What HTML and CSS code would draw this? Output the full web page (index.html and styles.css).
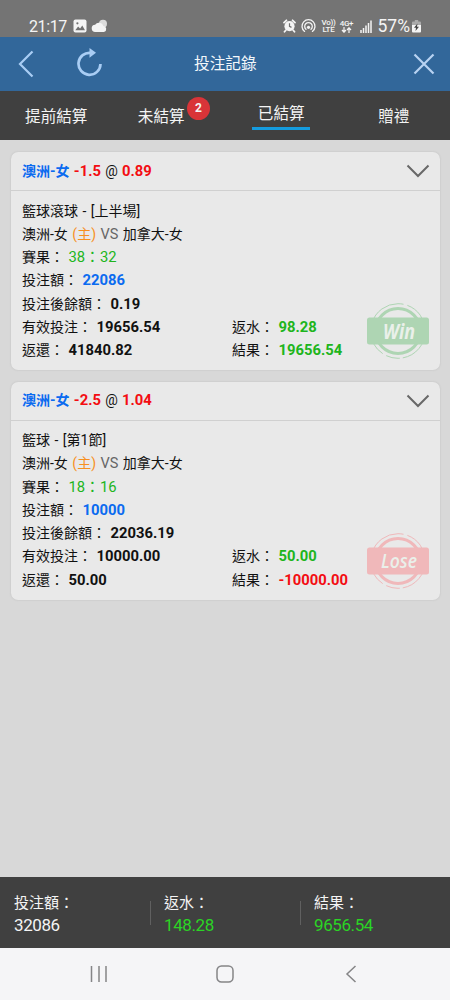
FILE: index.html
```html
<!DOCTYPE html>
<html lang="zh-Hant">
<head>
  <meta charset="UTF-8">
  <meta name="viewport" content="width=device-width, initial-scale=1">
  <title>投注記錄</title>
  <link rel="stylesheet" href="styles.css">
</head>
<body>

  <div class="status-bar">
    <span class="clock">21:17</span>
    <svg class="status-left" width="34" height="14" viewBox="0 0 34 14">
      <rect x="0.5" y="0.5" width="13" height="13" rx="2" fill="#f4f4f4"/>
      <path d="M2.3 11.2l2.8-3.6 2 2 2.2-3 2.7 4.6z" fill="#707070"/>
      <circle cx="4.4" cy="4.3" r="1.1" fill="#707070"/>
      <circle cx="30" cy="4.8" r="4" fill="#dcdcdc"/>
      <path d="M22.500 13a3.600 3.600 0 0 1-.4-7.200 4.600 4.600 0 0 1 8.300 1.300A3 3 0 0 1 31 13z" fill="#f4f4f4"/>
    </svg>
    <div class="status-right">
      <svg width="13" height="14" viewBox="0 0 13 14">
        <circle cx="6.5" cy="7.2" r="5.1" fill="#f4f4f4"/>
        <path d="M1 3.600l2.400-2.300M12 3.600L9.600 1.300M2.800 11.200l-1.300 1.600M10.200 11.200l1.300 1.600" stroke="#f4f4f4" stroke-width="1.800" stroke-linecap="round"/>
        <path d="M6.500 4.200v3.200l2 1" stroke="#707070" stroke-width="1.200" fill="none"/>
      </svg>
      <svg class="hotspot" width="15" height="14" viewBox="0 0 15 14">
        <g fill="none" stroke="#f4f4f4" stroke-width="1.300" stroke-linecap="round">
          <path d="M3.600 12.400a6.500 6.500 0 1 1 7.800 0"/>
          <path d="M5 10.300a3.800 3.800 0 1 1 5 0"/>
        </g>
        <circle cx="7.500" cy="8.300" r="1.600" fill="#f4f4f4"/>
      </svg>
      <span class="network volte">Vo))<br>LTE</span>
      <span class="network data">4G+<br>
        <svg width="11" height="6" viewBox="0 0 11 6">
          <path d="M3 0v5M1 3l2 2.200L5 3M8 6V1M6 3l2-2.200L10 3" fill="none" stroke="#f4f4f4" stroke-width="1.200"/>
        </svg>
      </span>
      <svg class="signal" width="12" height="13" viewBox="0 0 12 13">
        <path d="M1 13v-3M3.500 13V8M6 13V5.500M8.500 13V3M11 13V.5" stroke="#f4f4f4" stroke-width="1.500"/>
      </svg>
      <span class="battery">57%</span>
      <svg width="9" height="13" viewBox="0 0 9 13">
        <path d="M2.800 0h3.400v1.500H8a1 1 0 0 1 1 1V5H0V2.500a1 1 0 0 1 1-1h1.800z" fill="#aaa"/>
        <path d="M0 5h9v6.500a1 1 0 0 1-1 1H1a1 1 0 0 1-1-1z" fill="#f4f4f4"/>
        <path d="M5.500 3.500L2 7.700h2L3.500 11 7 6.800H5z" fill="#444"/>
      </svg>
    </div>
  </div>

  <header class="header">
    <svg class="back" width="16" height="28" viewBox="0 0 16 28">
      <path d="M14.500 1.500L2 14l12.500 12.500" fill="none" stroke="#a9cdf4" stroke-width="2.200"/>
    </svg>
    <svg class="refresh" width="26" height="29" viewBox="0 0 26 29">
      <path d="M14 4.900A11 11 0 1 0 23.500 16" fill="none" stroke="#a9cdf4" stroke-width="2.700"/>
      <path d="M12.500 0l6.500 4.700-6.500 5z" fill="#a9cdf4"/>
    </svg>
    <h1>投注記錄</h1>
    <svg class="close" width="22" height="22" viewBox="0 0 22 22">
      <path d="M1.500 1.500l19 19M20.500 1.500l-19 19" stroke="#b9d3f2" stroke-width="2.200"/>
    </svg>
  </header>

  <nav class="tabs">
    <a class="tab">提前結算</a>
    <a class="tab pending"><span class="tab-label">未結算<span class="badge">2</span></span></a>
    <a class="tab active"><span class="tab-label">已結算</span></a>
    <a class="tab">贈禮</a>
  </nav>

  <main class="content">
    <section class="card">
      <div class="card-head">
        <div class="pick"><span class="team">澳洲-女</span> <b class="red">-1.5</b> @ <b class="red">0.89</b></div>
        <svg width="24" height="14" viewBox="0 0 24 14">
          <path d="M1.500 1.500L12 12 22.500 1.500" fill="none" stroke="#686868" stroke-width="2"/>
        </svg>
      </div>
      <div class="card-body">
        <div class="row">籃球滾球 - [上半場]</div>
        <div class="row">澳洲-女 <span class="home">(主)</span> <span class="vs">VS</span> 加拿大-女</div>
        <div class="row">賽果： <span class="score">38：32</span></div>
        <div class="row">投注額： <b class="blue">22086</b></div>
        <div class="row">投注後餘額： <b>0.19</b></div>
        <div class="row split"><div>有效投注： <b>19656.54</b></div><div>返水： <b class="green">98.28</b></div></div>
        <div class="row split"><div>返還： <b>41840.82</b></div><div>結果： <b class="green">19656.54</b></div></div>
        <svg class="stamp win" width="62" height="58" viewBox="0 0 62 58">
          <circle class="ring" cx="31" cy="29" r="22.500"/>
          <circle class="dash" cx="31" cy="29" r="27.300"/>
          <rect x="0" y="15.500" width="62" height="27" rx="2.500"/>
          <text x="16" y="37" textLength="32" lengthAdjust="spacingAndGlyphs">Win</text>
        </svg>
      </div>
    </section>

    <section class="card">
      <div class="card-head">
        <div class="pick"><span class="team">澳洲-女</span> <b class="red">-2.5</b> @ <b class="red">1.04</b></div>
        <svg width="24" height="14" viewBox="0 0 24 14">
          <path d="M1.500 1.500L12 12 22.500 1.500" fill="none" stroke="#686868" stroke-width="2"/>
        </svg>
      </div>
      <div class="card-body">
        <div class="row">籃球 - [第1節]</div>
        <div class="row">澳洲-女 <span class="home">(主)</span> <span class="vs">VS</span> 加拿大-女</div>
        <div class="row">賽果： <span class="score">18：16</span></div>
        <div class="row">投注額： <b class="blue">10000</b></div>
        <div class="row">投注後餘額： <b>22036.19</b></div>
        <div class="row split"><div>有效投注： <b>10000.00</b></div><div>返水： <b class="green">50.00</b></div></div>
        <div class="row split"><div>返還： <b>50.00</b></div><div>結果： <b class="red">-10000.00</b></div></div>
        <svg class="stamp lose" width="62" height="58" viewBox="0 0 62 58">
          <circle class="ring" cx="31" cy="29" r="22.500"/>
          <circle class="dash" cx="31" cy="29" r="27.300"/>
          <rect x="0" y="15.500" width="62" height="27" rx="2.500"/>
          <text x="14" y="36" textLength="36" lengthAdjust="spacingAndGlyphs">Lose</text>
        </svg>
      </div>
    </section>
  </main>

  <footer class="summary">
    <div class="total"><div>投注額：</div><div class="amount">32086</div></div>
    <div class="total"><div>返水：</div><div class="amount up">148.28</div></div>
    <div class="total"><div>結果：</div><div class="amount up">9656.54</div></div>
  </footer>

  <div class="nav-bar">
    <svg width="18" height="18" viewBox="0 0 18 18">
      <path d="M1.500 1v16M9 1v16M16 1v16" stroke="#858587" stroke-width="1.500"/>
    </svg>
    <svg width="18" height="18" viewBox="0 0 18 18">
      <rect x="1" y="1" width="16" height="16" rx="4.500" fill="none" stroke="#858587" stroke-width="1.500"/>
    </svg>
    <svg width="18" height="18" viewBox="0 0 18 18">
      <path d="M13.500 1L5 9l8.500 8" fill="none" stroke="#858587" stroke-width="1.500"/>
    </svg>
  </div>

</body>
</html>
```
FILE: styles.css
```css
:root {
  --blue: #0b6bf0;
  --red: #f30d12;
  --green: #20b51c;
}

* {
  box-sizing: border-box;
}

body {
  margin: 0;
  height: 1000px;
  display: flex;
  flex-direction: column;
  background: #d8d8d8;
  color: #111;
  font-family: Roboto, "Noto Sans CJK TC", sans-serif;
  font-size: 14px;
}

svg {
  display: block;
  flex: none;
}

/* status bar */
.status-bar {
  height: 36.5px;
  padding: 16px 29px 0;
  display: flex;
  align-items: center;
  background: #747474;
  color: #f4f4f4;
}

.clock {
  font-size: 16px;
  width: 44px;
  letter-spacing: -0.4px;
}

.status-right {
  margin-left: auto;
  display: flex;
  align-items: center;
}

.hotspot {
  margin-left: 5px;
}

.network {
  font-size: 8px;
  font-weight: 500;
  line-height: 7px;
  text-align: center;
  letter-spacing: -0.3px;
}

.network svg {
  margin: 0 auto;
}

.volte {
  margin-left: 6px;
  width: 14px;
}

.data {
  margin-left: 4px;
  width: 14px;
}

.signal {
  margin-left: 6px;
}

.battery {
  margin: 0 2px 0 6px;
  font-size: 17.5px;
}

/* header */
.header {
  height: 54.5px;
  padding: 0 15px 0 18px;
  display: flex;
  align-items: center;
  background: #32679a;
  color: #f3f7fb;
}

.header h1 {
  flex: 1;
  margin: -2px 0 0 91px;
  font-size: 15.7px;
  font-weight: normal;
}

.refresh {
  margin: -3px 0 0 43px;
}

.tabs {
  height: 49px;
  display: flex;
  background: #404040;
  color: #f4f4f4;
  font-size: 15.6px;
}

.tab {
  flex: none;
  width: 25%;
  text-align: center;
  line-height: 53px;
}

.pending {
  padding-right: 15px;
}

.tab-label {
  position: relative;
}

.badge {
  position: absolute;
  top: -11px;
  left: 49px;
  width: 23px;
  height: 23px;
  border-radius: 50%;
  background: #d93438;
  font-size: 12px;
  font-weight: bold;
  line-height: 23px;
}

.active {
  line-height: 47px;
}

.active .tab-label {
  display: inline-block;
  height: 39px;
  width: 58px;
  border-bottom: 3px solid #159cdf;
}

/* bet cards */
.content {
  flex: 1;
  padding: 12px 10px 0 11px;
}

.card {
  height: 218px;
  margin-bottom: 11.5px;
  border-radius: 7px;
  background: #e9e9e9;
  box-shadow: 0 0 2px #bbb;
}

.card-head {
  height: 39px;
  padding: 0 10px 0 11px;
  display: flex;
  justify-content: space-between;
  align-items: center;
  border-bottom: 1px solid #d0d0d0;
}

.pick {
  margin-top: -3px;
  word-spacing: 0.8px;
}

.pick b {
  font-size: 14.8px;
}

.card-body {
  position: relative;
  padding: 8.5px 11px 0;
}

.row {
  height: 23.3px;
  line-height: 23.3px;
  white-space: nowrap;
  word-spacing: 1px;
}

.row b {
  font-size: 14.8px;
}

.split {
  display: grid;
  grid-template-columns: 210px 1fr;
}

.team {
  color: var(--blue);
  font-weight: bold;
}

.blue {
  color: var(--blue);
}

.red {
  color: var(--red);
}

.green,
.score {
  color: var(--green);
}

.score {
  font-size: 14.8px;
}

.home {
  color: #f7901e;
}

.vs {
  color: #666;
  font-size: 14.5px;
}

.stamp {
  position: absolute;
  right: 11px;
  top: 111px;
  --stamp: #aed5b3;
}

.lose {
  --stamp: #f0b8ba;
}

.stamp rect {
  fill: var(--stamp);
}

.stamp circle {
  fill: none;
  stroke: var(--stamp);
}

.ring {
  stroke-width: 3;
}

.dash {
  stroke-width: 1;
  stroke-dasharray: 38 3 14 4 30 5 40 4;
}

.stamp text {
  fill: #eaf0ea;
  font-family: "Open Sans", sans-serif;
  font-size: 21px;
  font-style: italic;
  font-weight: bold;
}

.lose text {
  font-size: 19px;
  font-weight: 600;
}

/* totals */
.summary {
  height: 71px;
  display: flex;
  background: #404040;
  color: #f4f4f4;
  font-size: 15px;
}

.total {
  position: relative;
  flex: 1;
  padding: 15px 0 0 14px;
  line-height: 22.3px;
}

.total + .total::before {
  content: "";
  position: absolute;
  left: 0;
  top: 24px;
  width: 1px;
  height: 24px;
  background: #606060;
}

.amount {
  font-size: 17px;
  letter-spacing: -0.4px;
}

.up {
  color: #2bd425;
}

.nav-bar {
  height: 52px;
  padding: 0 90px;
  display: flex;
  justify-content: space-between;
  align-items: center;
  background: #f5f5f7;
}
```
